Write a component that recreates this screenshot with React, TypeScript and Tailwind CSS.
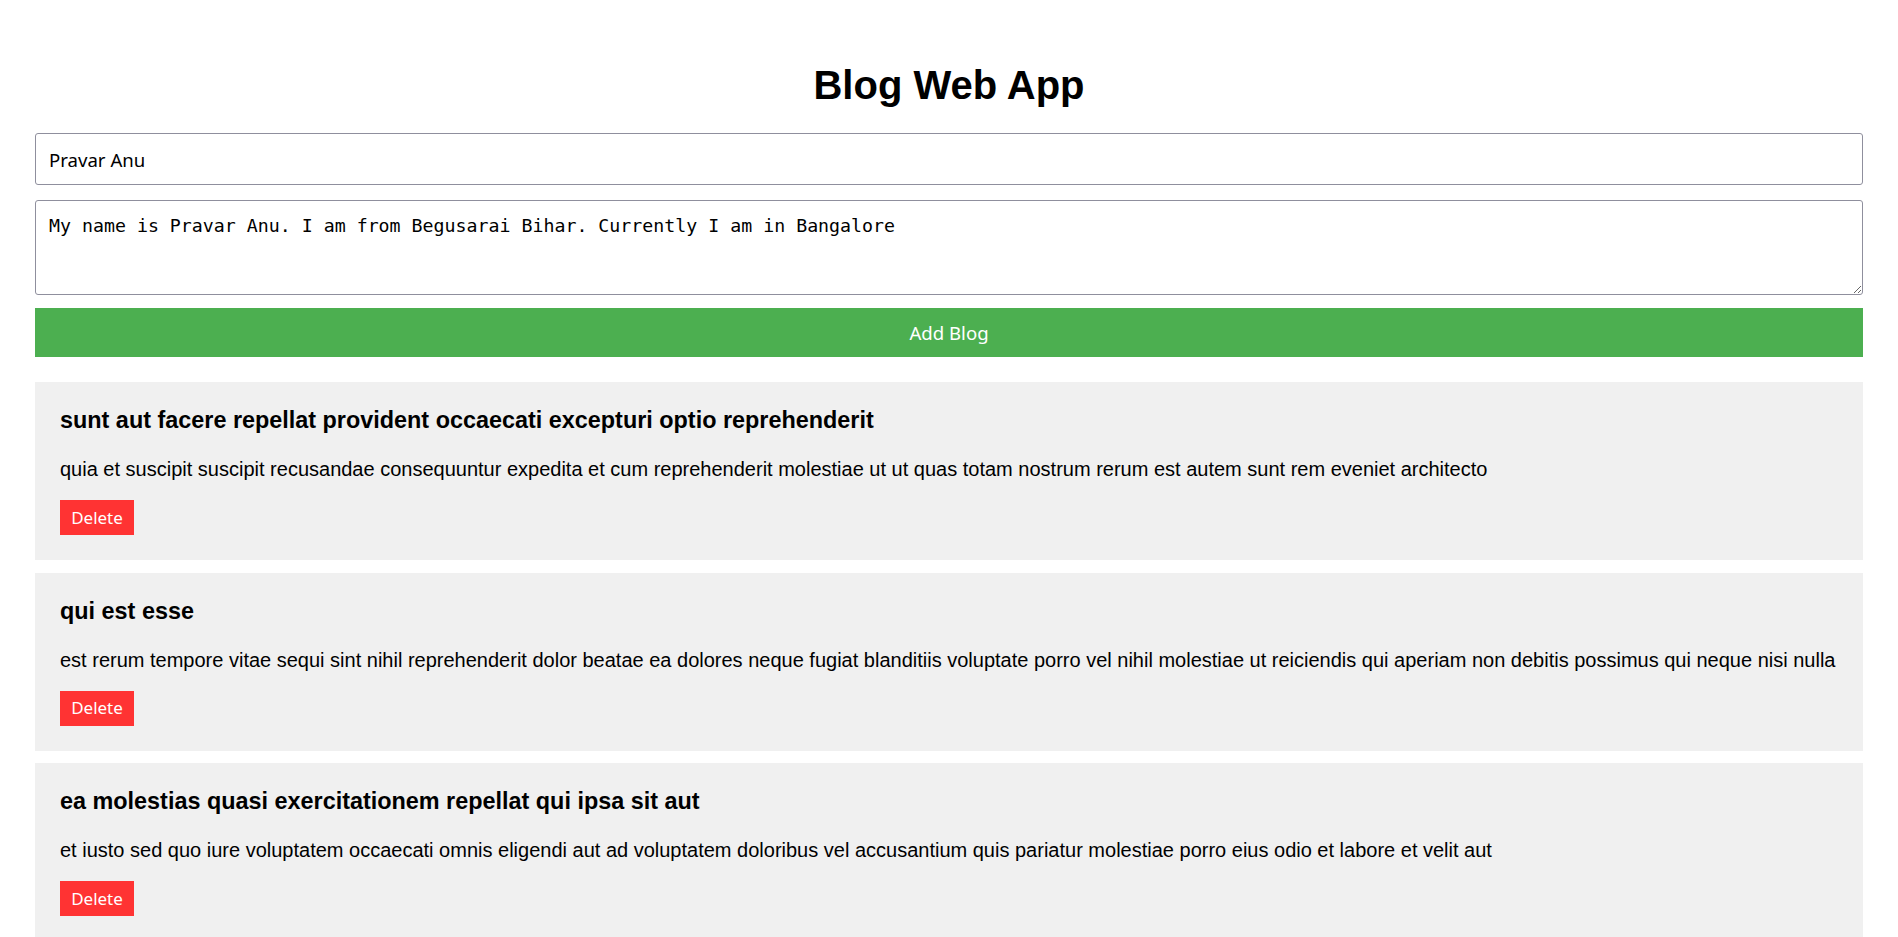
import { useState } from "react";

type Post = { id: number; title: string; body: string };

const initialPosts: Post[] = [
  {
    id: 1,
    title: "sunt aut facere repellat provident occaecati excepturi optio reprehenderit",
    body: "quia et suscipit suscipit recusandae consequuntur expedita et cum reprehenderit molestiae ut ut quas totam nostrum rerum est autem sunt rem eveniet architecto",
  },
  {
    id: 2,
    title: "qui est esse",
    body: "est rerum tempore vitae sequi sint nihil reprehenderit dolor beatae ea dolores neque fugiat blanditiis voluptate porro vel nihil molestiae ut reiciendis qui aperiam non debitis possimus qui neque nisi nulla",
  },
  {
    id: 3,
    title: "ea molestias quasi exercitationem repellat qui ipsa sit aut",
    body: "et iusto sed quo iure voluptatem occaecati omnis eligendi aut ad voluptatem doloribus vel accusantium quis pariatur molestiae porro eius odio et labore et velit aut",
  },
  {
    id: 4,
    title: "eum et est occaecati",
    body: "ullam et saepe reiciendis voluptatem adipisci sit amet autem assumenda provident rerum culpa quis hic commodi nesciunt rem tenetur doloremque ipsam iure quis sunt voluptatem rerum illo velit",
  },
  {
    id: 5,
    title: "nesciunt quas odio",
    body: "repudiandae veniam quaerat sunt sed alias aut fugiat sit autem sed est voluptatem omnis possimus esse voluptatibus quis est aut tenetur dolor neque",
  },
];

const App = () => {
  const [posts, setPosts] = useState<Post[]>(initialPosts);
  const [title, setTitle] = useState("Pravar Anu");
  const [body, setBody] = useState(
    "My name is Pravar Anu. I am from Begusarai Bihar. Currently I am in Bangalore"
  );

  const addPost = () => {
    if (!title.trim() || !body.trim()) return;
    setPosts([{ id: Date.now(), title, body }, ...posts]);
    setTitle("");
    setBody("");
  };

  return (
    <div className="min-h-screen bg-white px-[35px] pt-[35px] pb-[25px] font-['Liberation_Sans',Arial,sans-serif] text-black">
      {/* Heading */}
      <h1 className="mt-[27px] mb-[25px] text-center text-[40px] leading-[46px] font-bold">
        Blog Web App
      </h1>

      {/* Form */}
      <input
        type="text"
        value={title}
        onChange={(e) => setTitle(e.target.value)}
        className="block w-full h-[52px] px-[13px] border border-[#8f8f9d] rounded-[3px] bg-white font-['Noto_Sans',sans-serif] text-[18.6px] text-black outline-none"
      />
      <textarea
        value={body}
        onChange={(e) => setBody(e.target.value)}
        spellCheck={false}
        className="block w-full h-[95px] mt-[15px] px-[13px] pt-[14px] pb-[10px] border border-[#8f8f9d] rounded-[3px] bg-white font-['DejaVu_Sans_Mono',monospace] text-[18.25px] leading-[22px] text-black outline-none"
      />
      <button
        onClick={addPost}
        className="block w-full h-[49px] mt-[13px] bg-[#4caf50] font-['Noto_Sans',sans-serif] text-[18.6px] text-white cursor-pointer"
      >
        Add Blog
      </button>

      {/* Posts */}
      <div className="mt-[25px] flex flex-col gap-[12.5px]">
        {posts.map((post) => (
          <div key={post.id} className="bg-[#f0f0f0] p-[25px]">
            <h3 className="text-[23.4px] leading-[27px] font-bold">{post.title}</h3>
            <p className="mt-[24px] text-[20px] leading-[23px]">{post.body}</p>
            <button
              onClick={() => setPosts(posts.filter((p) => p.id !== post.id))}
              className="mt-[19px] h-[35px] w-[74px] bg-[#ff3333] font-['Noto_Sans',sans-serif] text-[17px] text-white cursor-pointer"
            >
              Delete
            </button>
          </div>
        ))}
      </div>
    </div>
  );
};

export default App;
